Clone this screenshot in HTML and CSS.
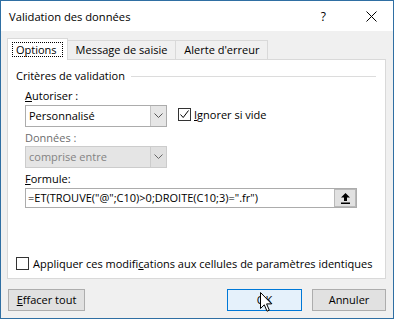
FILE: index.html
```html
<!DOCTYPE html>
<html lang="fr">
<head>
<meta charset="utf-8">
<title>Validation des données</title>
<link rel="stylesheet" href="styles.css">
</head>
<body>
<div class="window">
  <div class="titlebar">
    <span class="title">Validation des données</span>
    <span class="help">?</span>
    <svg class="close" width="11" height="11" viewBox="0 0 11 11"><path d="M0.5 0.5 L10.5 10.5 M10.5 0.5 L0.5 10.5" stroke="#000" stroke-width="1" fill="none"/></svg>
  </div>
  <div class="content">
    <div class="tabs">
      <div class="tab active"><span class="focus">Options</span></div>
      <div class="tab">Message de saisie</div>
      <div class="tab">Alerte d'erreur</div>
    </div>
    <div class="panel">
      <div class="group-title"><span>Critères de validation</span></div>
      <div class="group">
        <div class="label first"><u>A</u>utoriser :</div>
        <div class="row">
          <div class="select">
            <span class="select-text">Personnalisé</span>
            <span class="select-arrow"><svg width="9" height="6" viewBox="0 0 9 6"><polyline points="0.5,0.5 4.5,4.5 8.5,0.5" fill="none" stroke="#555" stroke-width="1"/></svg></span>
          </div>
          <label class="check">
            <span class="box"><svg width="11" height="11" viewBox="0 0 11 11"><polyline points="1.5,5.5 4.2,8.5 9.5,1.5" fill="none" stroke="#000" stroke-width="1"/></svg></span>
            <span><u>I</u>gnorer si vide</span>
          </label>
        </div>
        <div class="label disabled">Données :</div>
        <div class="select disabled-select">
          <span class="select-text">comprise entre</span>
          <span class="select-arrow"><svg width="9" height="6" viewBox="0 0 9 6"><polyline points="0.5,0.5 4.5,4.5 8.5,0.5" fill="none" stroke="#666" stroke-width="1"/></svg></span>
        </div>
        <div class="label"><u>F</u>ormule:</div>
        <div class="input">
          <span class="input-text">=ET(TROUVE("@";C10)&gt;0;DROITE(C10;3)=".fr")</span>
          <span class="range-btn"><svg width="9" height="11" viewBox="0 0 9 11"><path d="M4.5 0 L9 4.5 L6 4.5 L6 8 L3 8 L3 4.5 L0 4.5 Z" fill="#000"/><rect x="0" y="9.5" width="9" height="1.5" fill="#000"/></svg></span>
        </div>
      </div>
      <label class="check apply">
        <span class="box"></span>
        <span>Appliquer ces modifi<u>c</u>ations aux cellules de paramètres identiques</span>
      </label>
    </div>
    <div class="buttons">
      <div class="btn clear"><u>E</u>ffacer tout</div>
      <div class="spacer"></div>
      <div class="btn ok">OK</div>
      <div class="btn cancel">Annuler</div>
    </div>
  </div>
  <svg class="cursor" width="13" height="21" viewBox="0 0 13 21"><path d="M0.5 0.5 L0.5 16.5 L4.3 12.8 L7 19.2 L9.3 18.2 L6.6 11.9 L11.6 11.9 Z" fill="#fff" stroke="#000" stroke-width="1" stroke-linejoin="miter"/></svg>
</div>
</body>
</html>
```
FILE: styles.css
```css
* { box-sizing: border-box; }
html, body { margin: 0; padding: 0; }
body {
  width: 394px;
  height: 319px;
  font-family: "Open Sans", "Noto Sans", sans-serif;
  font-size: 11px;
  color: #000;
  overflow: hidden;
}
u { text-decoration: underline; text-underline-offset: 1px; }

.window {
  position: relative;
  width: 394px;
  height: 319px;
  border: 1px solid #2f6fa3;
  background: #f0f0f0;
  display: flex;
  flex-direction: column;
}

.titlebar {
  height: 30px;
  background: #fff;
  display: flex;
  align-items: center;
  padding-left: 8px;
  flex-shrink: 0;
}
.title { font-size: 11.2px; flex: 1; line-height: 15px; }
.help { font-size: 12px; margin-right: 40px; line-height: 15px; }
.close { margin-right: 16px; }

.content {
  padding: 7px 7px 0 6px;
  display: flex;
  flex-direction: column;
}

.tabs {
  display: flex;
  align-items: flex-end;
  height: 21px;
}
.tab {
  height: 19px;
  line-height: 17px;
  padding: 0 8px;
  border: 1px solid #d9d9d9;
  border-bottom: none;
  border-left: none;
  background: #f0f0f0;
}
.tab.active {
  height: 22px;
  margin-bottom: -1px;
  border-left: 1px solid #d9d9d9;
  background: #fff;
  padding: 3px 4px 0 4px;
  position: relative;
  z-index: 1;
}
.focus {
  display: block;
  border: 1px dotted #000;
  padding: 0 5px 0 3px;
  line-height: 13px;
}

.panel {
  height: 220px;
  background: #fff;
  border: 1px solid #d9d9d9;
  padding: 8px 0 0 8px;
}

.group-title {
  display: flex;
  align-items: center;
  line-height: 15px;
}
.group-title::after {
  content: "";
  flex: 1;
  border-top: 1px solid #dcdcdc;
  margin: 1px 9px 0 6px;
}

.group { padding-left: 9px; }

.label { line-height: 15px; margin-top: 3px; }
.label.first { margin-top: 5px; }
.label.disabled { color: #6d6d6d; }

.row { display: flex; align-items: flex-start; margin-top: 2px; }

.select {
  width: 142px;
  height: 22px;
  border: 1px solid #acacac;
  background: #fff;
  display: flex;
  align-items: stretch;
}
.select-text { flex: 1; padding-left: 3px; line-height: 20px; }
.select-arrow {
  width: 16px;
  background: #e6e6e6;
  border-left: 1px solid #c4c4c4;
  display: flex;
  align-items: center;
  justify-content: center;
}
.disabled-select {
  margin-top: 1px;
  background: #e5e5e5;
  border-color: #cccccc;
  color: #838383;
}
.disabled-select .select-arrow { background: #e0e0e0; border-left-color: #cccccc; }

.check { display: flex; align-items: center; line-height: 15px; }
.row .check { margin-left: 11px; margin-top: 2px; }
.box {
  width: 13px;
  height: 13px;
  border: 1px solid #333;
  background: #fff;
  margin-right: 3px;
  display: flex;
  align-items: center;
  justify-content: center;
}

.input {
  margin-top: 2px;
  width: 332px;
  height: 20px;
  border: 1px solid #acacac;
  background: #fff;
  display: flex;
  align-items: center;
}
.input-text { flex: 1; padding-left: 2px; line-height: 18px; }
.range-btn {
  width: 22px;
  height: 18px;
  background: #e1e1e1;
  border: 1px solid #b9b9b9;
  display: flex;
  align-items: center;
  justify-content: center;
}

.apply { margin-top: 48px; }
.apply .box { margin-right: 4px; }

.buttons {
  display: flex;
  margin-top: 10px;
}
.spacer { flex: 1; }
.btn {
  height: 22px;
  border: 1px solid #adadad;
  background: #e1e1e1;
  text-align: center;
  line-height: 20px;
}
.clear { width: 77px; margin-left: 1px; }
.ok { width: 75px; background: #e5f1fb; border-color: #0078d7; }
.cancel { width: 74px; margin-left: 10px; }

.cursor {
  position: absolute;
  left: 259px;
  top: 291px;
}
```
